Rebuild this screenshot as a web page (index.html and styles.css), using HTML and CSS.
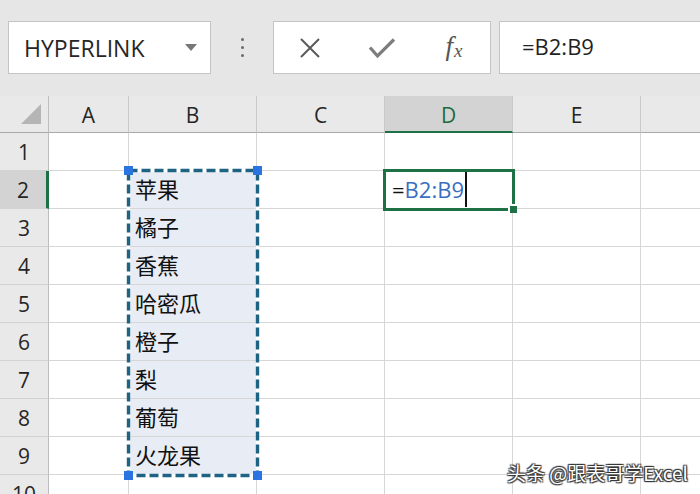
FILE: index.html
```html
<!DOCTYPE html>
<html lang="zh-CN">
<head>
  <meta charset="UTF-8">
  <title>Excel - HYPERLINK</title>
  <link rel="stylesheet" href="styles.css">
</head>
<body>

<div class="toolbar">
  <div class="name-box">
    <span>HYPERLINK</span>
    <span class="caret"></span>
  </div>
  <div class="grip"><i></i><i></i><i></i></div>
  <div class="btn-box">
    <span class="btn">
      <svg width="22" height="22" viewBox="0 0 22 22"><path d="M2 2 L20 20 M20 2 L2 20" stroke="#5a5a5a" stroke-width="2" fill="none"/></svg>
    </span>
    <span class="btn">
      <svg width="28" height="22" viewBox="0 0 28 22"><path d="M2 10.5 L9.5 19 L26 2.5" stroke="#7d7d7d" stroke-width="3.2" fill="none"/></svg>
    </span>
    <span class="btn fx">f<span class="fx-x">x</span></span>
  </div>
  <div class="formula-box">=B2:B9</div>
</div>

<div class="sheet">
  <!-- column headers -->
  <div class="corner"><span class="corner-tri"></span></div>
  <div class="col-head">A</div>
  <div class="col-head">B</div>
  <div class="col-head">C</div>
  <div class="col-head is-active">D</div>
  <div class="col-head">E</div>
  <div class="col-head"></div>

  <div class="row-head">1</div>
  <div class="cell"></div><div class="cell"></div><div class="cell"></div><div class="cell"></div><div class="cell"></div><div class="cell"></div>

  <div class="row-head is-active">2</div>
  <div class="cell"></div>
  <div class="cell in-range">苹果</div>
  <div class="cell"></div>
  <div class="cell editing">=<span class="ref">B2:B9</span><span class="cursor"></span></div>
  <div class="cell"></div><div class="cell"></div>

  <div class="row-head">3</div>
  <div class="cell"></div><div class="cell in-range">橘子</div><div class="cell"></div><div class="cell"></div><div class="cell"></div><div class="cell"></div>

  <div class="row-head">4</div>
  <div class="cell"></div><div class="cell in-range">香蕉</div><div class="cell"></div><div class="cell"></div><div class="cell"></div><div class="cell"></div>

  <div class="row-head">5</div>
  <div class="cell"></div><div class="cell in-range">哈密瓜</div><div class="cell"></div><div class="cell"></div><div class="cell"></div><div class="cell"></div>

  <div class="row-head">6</div>
  <div class="cell"></div><div class="cell in-range">橙子</div><div class="cell"></div><div class="cell"></div><div class="cell"></div><div class="cell"></div>

  <div class="row-head">7</div>
  <div class="cell"></div><div class="cell in-range">梨</div><div class="cell"></div><div class="cell"></div><div class="cell"></div><div class="cell"></div>

  <div class="row-head">8</div>
  <div class="cell"></div><div class="cell in-range">葡萄</div><div class="cell"></div><div class="cell"></div><div class="cell"></div><div class="cell"></div>

  <div class="row-head">9</div>
  <div class="cell"></div><div class="cell in-range">火龙果</div><div class="cell"></div><div class="cell"></div><div class="cell"></div><div class="cell"></div>

  <div class="row-head">10</div>
  <div class="cell"></div><div class="cell"></div><div class="cell"></div><div class="cell"></div><div class="cell"></div><div class="cell"></div>

  <!-- copied range B2:B9 (marching ants) -->
  <div class="range-marquee">
    <svg width="132" height="308">
      <rect x="1.5" y="1.5" width="129" height="305" fill="none" stroke="#ffffff" stroke-width="3.4"/>
      <rect x="1.5" y="1.5" width="129" height="305" fill="none" stroke="#1f6384" stroke-width="3.4" stroke-dasharray="9 4"/>
      <rect x="-3" y="-3" width="9" height="9" fill="#2a74e2"/>
      <rect x="126" y="-3" width="9" height="9" fill="#2a74e2"/>
      <rect x="-3" y="302" width="9" height="9" fill="#2a74e2"/>
      <rect x="126" y="302" width="9" height="9" fill="#2a74e2"/>
    </svg>
  </div>

  <!-- active cell D2 -->
  <div class="active-cell"><span class="fill-handle"></span></div>
</div>

<div class="watermark">头条 @跟表哥学Excel</div>

</body>
</html>
```

FILE: styles.css
```css
body {
  margin: 0;
  width: 700px;
  height: 494px;
  overflow: hidden;
  position: relative;
  background-color: #fff;
  font-family: 'Open Sans', 'Noto Sans CJK SC', sans-serif;
  color: #222;
}

/* formula bar */
.toolbar {
  height: 96px;
  box-sizing: border-box;
  padding: 21px 0 0 8px;
  display: flex;
  align-items: flex-start;
  background-color: #e6e6e6;
}

.toolbar > * {
  flex-shrink: 0;
}

.name-box {
  width: 203px;
  height: 53px;
  box-sizing: border-box;
  border: 1px solid #c4c4c4;
  background-color: #fff;
  display: flex;
  align-items: center;
  padding: 0 13px 0 15px;
  font-size: 23px;
  color: #262626;
}

.caret {
  margin-left: auto;
  width: 0;
  height: 0;
  border-left: 6.5px solid transparent;
  border-right: 6.5px solid transparent;
  border-top: 7px solid #777;
}

.grip {
  width: 62px;
  height: 53px;
  display: flex;
  flex-direction: column;
  align-items: center;
  justify-content: center;
  gap: 5px;
}

.grip i {
  width: 3px;
  height: 3px;
  border-radius: 50%;
  background-color: #6a6a6a;
}

.btn-box {
  width: 218px;
  height: 53px;
  box-sizing: border-box;
  border: 1px solid #c4c4c4;
  background-color: #fff;
  display: flex;
}

.btn {
  width: 72px;
  display: flex;
  align-items: center;
  justify-content: center;
}

.fx {
  font-family: 'Liberation Serif', serif;
  font-style: italic;
  font-size: 27px;
  color: #555;
  padding-bottom: 2px;
}

.fx-x {
  font-size: 19px;
  margin-left: 1px;
  margin-top: 8px;
}

.formula-box {
  width: 230px;
  height: 53px;
  box-sizing: border-box;
  margin-left: 8px;
  border: 1px solid #c4c4c4;
  background-color: #fff;
  display: flex;
  align-items: center;
  padding-left: 22px;
  padding-bottom: 4px;
  font-size: 22px;
  color: #222;
}

/* grid */
.sheet {
  position: relative;
  width: 720px;
  display: grid;
  grid-template-columns: 49px 80px 128px 128px 128px 128px 79px;
  grid-template-rows: 37px repeat(10, 38px);
}

.corner,
.col-head,
.row-head {
  background-color: #e9e9e9;
  box-sizing: border-box;
  display: flex;
  align-items: center;
  justify-content: center;
  font-size: 21px;
  color: #262626;
}

.corner {
  align-items: flex-end;
  justify-content: flex-end;
  padding: 0 7px 8px 0;
  border-right: 1px solid #bdbdbd;
  border-bottom: 1px solid #a8a8a8;
}

.corner-tri {
  width: 0;
  height: 0;
  border-left: 20px solid transparent;
  border-bottom: 20px solid #b5b5b5;
}

.col-head {
  border-right: 1px solid #c9c9c9;
  border-bottom: 1px solid #a8a8a8;
  padding-top: 2px;
}

.col-head.is-active {
  background-color: #d3d3d3;
  color: #1d6b40;
  border-bottom: 2px solid #1e7145;
}

.row-head {
  border-right: 1px solid #bdbdbd;
  border-bottom: 1px solid #d2d2d2;
}

.row-head.is-active {
  background-color: #d3d3d3;
  border-right: 3px solid #1e7145;
}

.cell {
  box-sizing: border-box;
  border-right: 1px solid #d6d6d6;
  border-bottom: 1px solid #d6d6d6;
  display: flex;
  align-items: center;
  font-size: 22px;
  color: #111;
  white-space: nowrap;
}

.cell.in-range {
  background-color: #e8ecf4;
  padding-left: 6px;
  padding-bottom: 3px;
}

.cell.editing {
  padding-left: 7px;
  padding-bottom: 2px;
}

.ref {
  color: #3a6fc0;
}

.cursor {
  width: 2px;
  height: 35px;
  margin-left: 1px;
  margin-top: 2px;
  background-color: #111;
}

.range-marquee {
  position: absolute;
  grid-column: 3 / 4;
  grid-row: 3 / 11;
  top: -2px;
  left: -2px;
  right: -2px;
  bottom: -2px;
}

.range-marquee svg {
  overflow: visible;
  display: block;
}

.active-cell {
  position: absolute;
  grid-column: 5 / 6;
  grid-row: 3 / 4;
  top: -2px;
  left: -2px;
  right: -2px;
  bottom: -2px;
  border: 3px solid #1e7145;
}

.fill-handle {
  position: absolute;
  right: -5px;
  bottom: -5px;
  width: 7px;
  height: 7px;
  background-color: #1e7145;
  border-left: 2px solid #fff;
  border-top: 2px solid #fff;
}

.watermark {
  position: absolute;
  right: 12px;
  bottom: 8px;
  font-family: 'Noto Sans CJK SC', sans-serif;
  font-size: 19px;
  color: #fff;
  text-shadow: 1px 1px 1px #333, -1px -1px 1px #333, 1px -1px 1px #333, -1px 1px 1px #333;
}
```
